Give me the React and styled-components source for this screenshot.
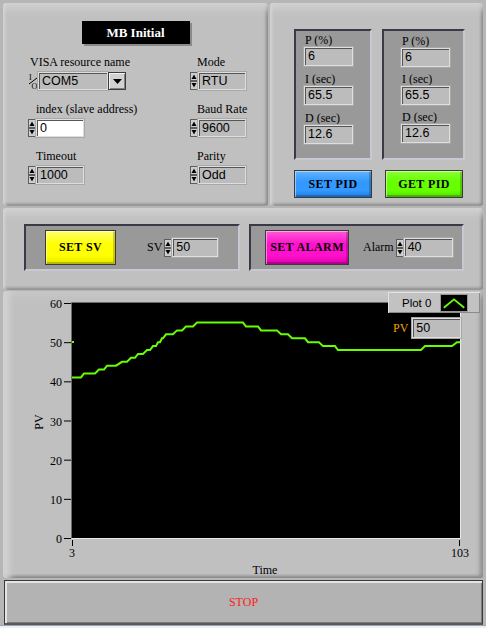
import React from 'react';
import styled, { createGlobalStyle } from 'styled-components';

const GlobalStyle = createGlobalStyle`
  html, body {
    margin: 0;
    padding: 0;
  }
  body {
    background: #b6b6b6;
    font-family: "Liberation Serif", "Times New Roman", serif;
    color: #000;
  }
  * {
    box-sizing: border-box;
  }
`;

// plot data, read off the trend (value, x from, x to)
const steps = [
  [41, 72, 81], [42, 84, 95], [43, 99, 104], [44, 107, 116], [45, 122, 127],
  [46, 131, 135], [47, 138, 143], [48, 147, 150], [49, 153, 156], [50, 158, 160],
  [51, 162, 163], [52, 166, 173], [53, 177, 182], [54, 186, 193], [55, 197, 243],
  [54, 246, 258], [53, 261, 277], [52, 281, 288], [51, 292, 305], [50, 308, 319],
  [49, 323, 335], [48, 338, 421], [49, 425, 452], [50, 457, 460],
];
const yOf = (v) => 538 - v * (235 / 60);
const trend = steps
  .flatMap(([v, a, b]) => [`${a},${yOf(v).toFixed(1)}`, `${b},${yOf(v).toFixed(1)}`])
  .join(' ');

const Spinner = () => (
  <SpinBox>
    <svg width="8" height="18" viewBox="0 0 8 18">
      <rect x="0.5" y="0.5" width="7" height="8" fill="#cfcfcf" stroke="#5c5c5c" />
      <rect x="0.5" y="9.5" width="7" height="8" fill="#cfcfcf" stroke="#5c5c5c" />
      <polygon points="1.5,7 4,2.5 6.5,7" fill="#000" />
      <polygon points="1.5,11 4,15.5 6.5,11" fill="#000" />
    </svg>
  </SpinBox>
);

const VisaIcon = () => (
  <IconBox>
    <svg width="10" height="18" viewBox="0 0 10 18">
      <text x="1" y="8" fontSize="8" fontFamily="Liberation Serif, serif">I</text>
      <line x1="1" y1="12" x2="9" y2="6" stroke="#000" strokeWidth="1" />
      <text x="3.5" y="17" fontSize="8" fontFamily="Liberation Serif, serif">O</text>
    </svg>
  </IconBox>
);

const NumField = ({ w, value, white }) => (
  <ControlRow>
    <Spinner />
    <ValueBox $w={w} $white={white}>{value}</ValueBox>
  </ControlRow>
);

const PidBlock = ({ top, left, gap, w }) => (
  <PidGroup $w={w} $top={top} $left={left} $gap={gap}>
    <PidField>
      <PidLabel>P (%)</PidLabel>
      <ValueBox $w={49} $h={19}>6</ValueBox>
    </PidField>
    <PidField>
      <PidLabel>I (sec)</PidLabel>
      <ValueBox $w={49} $h={19}>65.5</ValueBox>
    </PidField>
    <PidField>
      <PidLabel>D (sec)</PidLabel>
      <ValueBox $w={49} $h={19}>12.6</ValueBox>
    </PidField>
  </PidGroup>
);

const Chart = () => {
  const yTicks = [60, 50, 40, 30, 20, 10, 0];
  return (
    <svg width="480" height="287" viewBox="3 291 480 287" style={{ display: 'block' }}>
      <rect x="72" y="303" width="388" height="235" fill="#000" />
      <line x1="71.5" y1="302.5" x2="460.5" y2="302.5" stroke="#6a6a6a" />
      <line x1="71.5" y1="302.5" x2="71.5" y2="538.5" stroke="#6a6a6a" />
      <line x1="71.5" y1="538.5" x2="460.5" y2="538.5" stroke="#e8e8e8" />
      <line x1="460.5" y1="302.5" x2="460.5" y2="538.5" stroke="#e8e8e8" />
      {yTicks.map((v, i) => {
        const y = 303 + i * (235 / 6);
        return (
          <g key={v}>
            <line x1="64" y1={y + 0.5} x2="71" y2={y + 0.5} stroke="#000" />
            <text
              x="62"
              y={y + 5}
              textAnchor="end"
              fontSize="12"
              fontFamily="Liberation Serif, serif"
            >
              {v}
            </text>
          </g>
        );
      })}
      <text
        x="0"
        y="0"
        transform="translate(43 422) rotate(-90)"
        textAnchor="middle"
        fontSize="12"
        fontFamily="Liberation Serif, serif"
      >
        PV
      </text>
      <line x1="72.5" y1="540" x2="72.5" y2="546" stroke="#000" />
      <line x1="459.5" y1="540" x2="459.5" y2="546" stroke="#000" />
      <text x="72" y="557" textAnchor="middle" fontSize="12" fontFamily="Liberation Serif, serif">
        3
      </text>
      <text x="460" y="557" textAnchor="middle" fontSize="12" fontFamily="Liberation Serif, serif">
        103
      </text>
      <text x="265" y="574" textAnchor="middle" fontSize="12" fontFamily="Liberation Serif, serif">
        Time
      </text>
      <rect x="72" y="341" width="2" height="2" fill="#66ff00" />
      <polyline points={trend} fill="none" stroke="#66ff00" strokeWidth="2" />
    </svg>
  );
};

export default function App() {
  return (
    <>
      <GlobalStyle />
      <Screen>
        <TopRow>
          <Panel $w={265} $h={203}>
            <TitleBox>MB Initial</TitleBox>
            <FormGrid>
              <Field>
                <FieldLabel $indent={2}>VISA resource name</FieldLabel>
                <ControlRow>
                  <VisaIcon />
                  <ValueBox $w={70}>COM5</ValueBox>
                  <DropButton>
                    <svg width="9" height="5" viewBox="0 0 9 5">
                      <polygon points="0,0 9,0 4.5,5" fill="#000" />
                    </svg>
                  </DropButton>
                </ControlRow>
              </Field>
              <Field>
                <FieldLabel $indent={7}>Mode</FieldLabel>
                <NumField w={48} value="RTU" />
              </Field>
              <Field>
                <FieldLabel $indent={8}>index (slave address)</FieldLabel>
                <NumField w={48} value="0" white />
              </Field>
              <Field>
                <FieldLabel $indent={7}>Baud Rate</FieldLabel>
                <NumField w={48} value="9600" />
              </Field>
              <Field>
                <FieldLabel $indent={8}>Timeout</FieldLabel>
                <NumField w={48} value="1000" />
              </Field>
              <Field>
                <FieldLabel $indent={7}>Parity</FieldLabel>
                <NumField w={48} value="Odd" />
              </Field>
            </FormGrid>
          </Panel>

          <Panel $w={213} $h={203}>
            <PidArea>
              <PidColumn>
                <PidBlock w={78} top={3} left={8} gap={7} />
                <ColorButton $w={78} $h={28} $light="#62b4ff" $base="#3399ff" $dark="#1d7fe6">
                  SET PID
                </ColorButton>
              </PidColumn>
              <PidColumn>
                <PidBlock w={83} top={4} left={17} gap={6} />
                <ColorButton
                  $w={78}
                  $h={28}
                  $offset={3}
                  $light="#8cff3a"
                  $base="#66ff00"
                  $dark="#52dc00"
                >
                  GET PID
                </ColorButton>
              </PidColumn>
            </PidArea>
          </Panel>
        </TopRow>

        <Panel $h={82} $mt={2}>
          <ActionArea>
            <ActionGroup $w={216} $pad={19}>
              <ColorButton $w={71} $h={35} $light="#ffff70" $base="#ffff00" $dark="#e4e400">
                SET SV
              </ColorButton>
              <InlineLabel $ml={31}>SV</InlineLabel>
              <ControlRow>
                <Spinner />
                <ValueBox $w={46} $h={19}>50</ValueBox>
              </ControlRow>
            </ActionGroup>
            <ActionGroup $w={215} $pad={14}>
              <ColorButton $w={84} $h={35} $light="#ff5ad8" $base="#ff10cc" $dark="#dc00ac">
                SET ALARM
              </ColorButton>
              <InlineLabel $ml={14}>Alarm</InlineLabel>
              <ControlRow>
                <Spinner />
                <ValueBox $w={49} $h={19}>40</ValueBox>
              </ControlRow>
            </ActionGroup>
          </ActionArea>
        </Panel>

        <GraphPanel>
          <Chart />
          <Legend>
            <LegendText>Plot 0</LegendText>
            <Swatch>
              <svg width="28" height="18" viewBox="0 0 28 18">
                <polyline points="3,13 14,4 25,13" fill="none" stroke="#66ff00" strokeWidth="2" />
              </svg>
            </Swatch>
          </Legend>
          <PvReadout>
            <PvLabel>PV</PvLabel>
            <ValueBox $w={49} $h={20}>50</ValueBox>
          </PvReadout>
        </GraphPanel>

        <StopButton>STOP</StopButton>
        <Footer />
      </Screen>
    </>
  );
}

const Screen = styled.div`
  width: 486px;
  height: 628px;
  overflow: hidden;
  display: flex;
  flex-direction: column;
  padding: 3px 3px 0 3px;
  background: #b6b6b6;
`;

const TopRow = styled.div`
  display: flex;
  gap: 2px;
`;

const Panel = styled.section`
  position: relative;
  flex: none;
  width: ${(p) => (p.$w ? `${p.$w}px` : 'auto')};
  height: ${(p) => p.$h}px;
  margin-top: ${(p) => p.$mt || 0}px;
  background: #c0c0c0;
  border-radius: 3px;
  box-shadow:
    inset 0 13px 8px -8px #d3d3d3,
    inset 3px 0 3px -1px #d6d6d6,
    inset -3px 0 3px -1px #8c8c8c,
    inset 0 -3px 3px -1px #858585;
`;

const TitleBox = styled.div`
  width: 108px;
  height: 23px;
  margin: 18px auto 0;
  display: flex;
  align-items: center;
  justify-content: center;
  background: #000;
  color: #fff;
  font-size: 13px;
  font-weight: bold;
  box-shadow: 2px 2px 0 #8a8a8a;
`;

const FormGrid = styled.div`
  display: grid;
  grid-template-columns: 162px 1fr;
  row-gap: 12px;
  padding: 11px 0 0 25px;
`;

const Field = styled.div`
  display: flex;
  flex-direction: column;
  gap: 3px;
`;

const FieldLabel = styled.div`
  height: 14px;
  padding-left: ${(p) => p.$indent || 0}px;
  font-size: 12px;
  line-height: 14px;
  white-space: nowrap;
`;

const ControlRow = styled.div`
  display: flex;
  align-items: stretch;
  height: 18px;
`;

const SpinBox = styled.div`
  width: 8px;
  display: flex;
  align-items: center;
`;

const IconBox = styled.div`
  width: 10px;
  display: flex;
  align-items: center;
`;

const ValueBox = styled.div`
  width: ${(p) => p.$w}px;
  height: ${(p) => (p.$h ? `${p.$h}px` : '100%')};
  padding-left: 3px;
  background: ${(p) => (p.$white ? '#ffffff' : '#bcbcbc')};
  border: 1px solid #dedede;
  box-shadow: inset 1px 1px 0 #555555, 0 0 0 1px #a8a8a8;
  font-family: "Liberation Sans", Arial, sans-serif;
  font-size: 12.5px;
  line-height: ${(p) => (p.$h ? p.$h - 2 : 16)}px;
  white-space: nowrap;
`;

const DropButton = styled.div`
  width: 18px;
  display: flex;
  align-items: center;
  justify-content: center;
  background: #d2d2d2;
  border: 1px solid #3c3c3c;
  box-shadow: inset 1px 1px 0 #f2f2f2, inset -1px -1px 0 #808080;
`;

const PidArea = styled.div`
  display: flex;
  gap: 10px;
  padding: 26px 0 0 24px;
`;

const PidColumn = styled.div`
  display: flex;
  flex-direction: column;
  align-items: flex-start;
  gap: 10px;
`;

const DarkGroup = styled.div`
  background: #999999;
  border: 2px solid;
  border-color: #3a3a46 #c8c8d2 #c8c8d2 #3a3a46;
`;

const PidGroup = styled(DarkGroup)`
  width: ${(p) => p.$w}px;
  height: 131px;
  display: flex;
  flex-direction: column;
  gap: ${(p) => p.$gap}px;
  padding: ${(p) => p.$top}px 0 0 ${(p) => p.$left}px;
`;

const PidField = styled.div`
  display: flex;
  flex-direction: column;
`;

const PidLabel = styled.div`
  height: 13px;
  padding-left: 1px;
  font-size: 12px;
  font-weight: normal;
  line-height: 13px;
  white-space: nowrap;
`;

const ColorButton = styled.button`
  flex: none;
  width: ${(p) => p.$w}px;
  height: ${(p) => p.$h}px;
  margin: 0 0 0 ${(p) => p.$offset || 0}px;
  padding: 0;
  display: flex;
  align-items: center;
  justify-content: center;
  background: linear-gradient(180deg, ${(p) => p.$light} 0%, ${(p) => p.$base} 40%, ${(p) => p.$base} 75%, ${(p) => p.$dark} 100%);
  border: 1px solid #3a3a3a;
  box-shadow: inset 1px 1px 0 rgba(255, 255, 255, 0.45), inset -2px -2px 0 rgba(0, 0, 0, 0.2);
  color: #000;
  font-family: "Liberation Serif", "Times New Roman", serif;
  font-size: 12px;
  font-weight: bold;
  letter-spacing: 0.4px;
  white-space: nowrap;
`;

const ActionArea = styled.div`
  display: flex;
  gap: 9px;
  padding: 16px 0 0 21px;
`;

const ActionGroup = styled(DarkGroup)`
  width: ${(p) => p.$w}px;
  height: 47px;
  display: flex;
  align-items: center;
  padding-left: ${(p) => p.$pad}px;

  ${ControlRow} {
    height: 19px;
  }
`;

const InlineLabel = styled.span`
  margin: 0 2px 0 ${(p) => p.$ml}px;
  font-size: 12px;
`;

const GraphPanel = styled(Panel)`
  height: 287px;
  margin-top: 1px;
  box-shadow:
    inset 0 10px 8px -8px #d0d0d0,
    inset 13px 0 7px -7px #d4d4d4,
    inset 2px 0 0 #a8a8a8,
    inset -4px 0 4px -1px #8c8c8c,
    inset 0 -3px 3px -1px #858585;
`;

const Legend = styled.div`
  position: absolute;
  left: 385px;
  top: 1px;
  width: 92px;
  height: 21px;
  display: flex;
  align-items: center;
  padding-left: 14px;
  background: #c2c2c2;
  box-shadow: inset 1px 1px 0 #e2e2e2, inset -1px -1px 0 #8a8a8a;
`;

const LegendText = styled.span`
  width: 38px;
  font-family: "Liberation Sans", Arial, sans-serif;
  font-size: 11.5px;
`;

const Swatch = styled.div`
  width: 28px;
  height: 18px;
  background: #000;
  border: 1px solid #9a9a9a;
  display: flex;
`;

const PvReadout = styled.div`
  position: absolute;
  left: 390px;
  top: 27px;
  display: flex;
  align-items: center;
  gap: 4px;
`;

const PvLabel = styled.span`
  color: #f2a000;
  font-size: 12px;
`;

const StopButton = styled.button`
  flex: none;
  height: 45px;
  margin: 2px 0 0 1px;
  padding: 0;
  background: #b3b3b3;
  border: 1px solid #3a3a3a;
  border-bottom: 2px solid #5a5a5a;
  box-shadow: inset 2px 2px 0 #e4e4e4, inset -1px -1px 0 #7c7c7c;
  color: #ff1a1a;
  font-family: "Liberation Serif", "Times New Roman", serif;
  font-size: 12px;
`;

const Footer = styled.div`
  flex: 1;
  margin: 0 -3px;
  background: #eef0f4;
  border-top: 1px solid #9aa4b4;
`;
